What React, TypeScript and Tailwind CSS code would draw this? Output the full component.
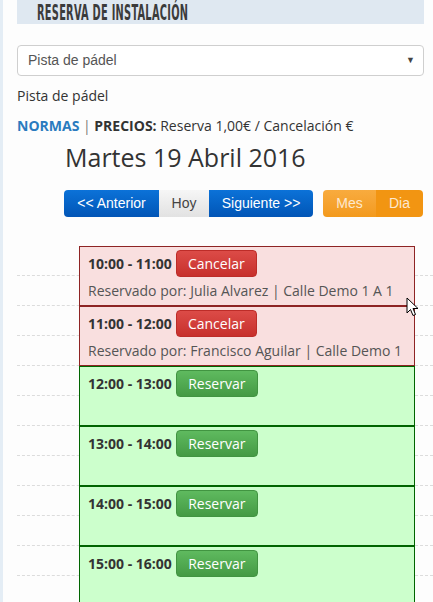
import React from "react";

const slots = [
  { time: "10:00 - 11:00", booked: true, by: "Reservado por: Julia Alvarez | Calle Demo 1 A 1" },
  { time: "11:00 - 12:00", booked: true, by: "Reservado por: Francisco Aguilar | Calle Demo 1" },
  { time: "12:00 - 13:00", booked: false },
  { time: "13:00 - 14:00", booked: false },
  { time: "14:00 - 15:00", booked: false },
  { time: "15:00 - 16:00", booked: false },
];

export default function App() {
  return (
    <div
      className="relative w-[433px] h-[602px] overflow-hidden bg-[#fdfdfd] border-l-[3px] border-[#e4edf5] text-[#333]"
      style={{ fontFamily: '"Open Sans", "Liberation Sans", sans-serif' }}
    >
      <div className="pl-[14px] pr-[9px]">
        {/* header */}
        <div className="h-[24px] bg-[#dfe8f1] pl-[20px] flex items-center overflow-hidden">
          <span
            className="inline-block origin-left scale-x-[0.52] uppercase text-[21px] leading-none font-bold text-[#3b3b3b] whitespace-nowrap tracking-[0.5px] mt-[2px]"
            style={{ fontFamily: '"Liberation Sans Narrow", "DejaVu Sans Condensed", "Liberation Sans", sans-serif' }}
          >
            Reserva de instalación
          </span>
        </div>

        {/* select */}
        <div
          className="mt-[21px] h-[31px] rounded-[4px] border border-[#cfcfcf] bg-white flex items-center justify-between pl-[10px] pr-[8px] text-[14px] text-[#555]"
          style={{ fontFamily: '"Liberation Sans", Arial, sans-serif' }}
        >
          <span>Pista de pádel</span>
          <span className="text-[9px] text-[#444]">▼</span>
        </div>

        <div className="mt-[10px] text-[14px] leading-[20px] text-[#333]">Pista de pádel</div>

        <div className="mt-[10px] text-[14px] leading-[20px] text-[#333]">
          <span className="font-bold text-[#2a7bbf]">NORMAS</span>
          <span className="text-[#777]"> | </span>
          <span className="font-bold">PRECIOS:</span> Reserva 1,00€ / Cancelación €
        </div>

        <div className="mt-[6px] pl-[48px] text-[25px] leading-[30px] text-[#333]">Martes 19 Abril 2016</div>

        {/* toolbar */}
        <div
          className="mt-[18px] ml-[47px] flex items-center gap-[10px] text-[14px]"
          style={{ fontFamily: '"Liberation Sans", Arial, sans-serif' }}
        >
          <div className="flex h-[27px]">
            <div className="w-[95px] flex items-center justify-center rounded-l-[4px] text-white bg-gradient-to-b from-[#0c72d8] to-[#0255b6]">
              &lt;&lt; Anterior
            </div>
            <div className="w-[50px] flex items-center justify-center text-[#444] bg-gradient-to-b from-[#f6f6f6] to-[#e2e2e2]">
              Hoy
            </div>
            <div className="w-[104px] flex items-center justify-center rounded-r-[4px] text-white bg-gradient-to-b from-[#0c72d8] to-[#0255b6]">
              Siguiente &gt;&gt;
            </div>
          </div>
          <div className="flex h-[27px]">
            <div className="w-[53px] flex items-center justify-center rounded-l-[4px] text-[#fde9cf] bg-gradient-to-b from-[#f8ab3e] to-[#f39a1c]">
              Mes
            </div>
            <div className="w-[47px] flex items-center justify-center rounded-r-[4px] text-[#fde9cf] bg-[#f29512]">
              Dia
            </div>
          </div>
        </div>
      </div>

      {/* calendar */}
      <div className="relative mt-[29px] ml-[14px]">
        <div className="absolute inset-0">
          {Array.from({ length: 12 }).map((_, i) => (
            <div key={i} className="h-[30px] border-b border-dashed border-[#dcdcdc]" />
          ))}
        </div>
        <div className="relative ml-[62px] w-[336px] flex flex-col">
          {slots.map((s, i) => (
            <div
              key={i}
              className={
                "h-[60px] border pl-[8px] pt-[3px] " +
                (s.booked ? "bg-[#f9dfdf] border-[#8e2424]" : "bg-[#ccffcc] border-[#006400]")
              }
            >
              <div className="flex items-center gap-[4px]">
                <span className="font-bold text-[14px] text-[#333]">{s.time}</span>
                {s.booked ? (
                  <span className="h-[27px] w-[81px] flex items-center justify-center rounded-[4px] text-white text-[14px] bg-gradient-to-b from-[#dc4b47] to-[#c7302c] border border-[#bd2c28]">
                    Cancelar
                  </span>
                ) : (
                  <span className="h-[27px] w-[82px] flex items-center justify-center rounded-[4px] text-white text-[14px] bg-gradient-to-b from-[#5fba5f] to-[#449a44] border border-[#419441]">
                    Reservar
                  </span>
                )}
              </div>
              {s.by && <div className="mt-[4px] text-[14px] leading-[20px] text-[#555] whitespace-nowrap">{s.by}</div>}
            </div>
          ))}
        </div>
      </div>

      {/* mouse cursor */}
      <svg className="absolute left-[403px] top-[297px]" width="14" height="21" viewBox="0 0 14 21">
        <path d="M1 1 L1 16 L4.5 12.5 L7 18.5 L9.5 17.5 L7 11.5 L12 11.5 Z" fill="#fff" stroke="#000" strokeWidth="1" strokeLinejoin="round" />
      </svg>
    </div>
  );
}
